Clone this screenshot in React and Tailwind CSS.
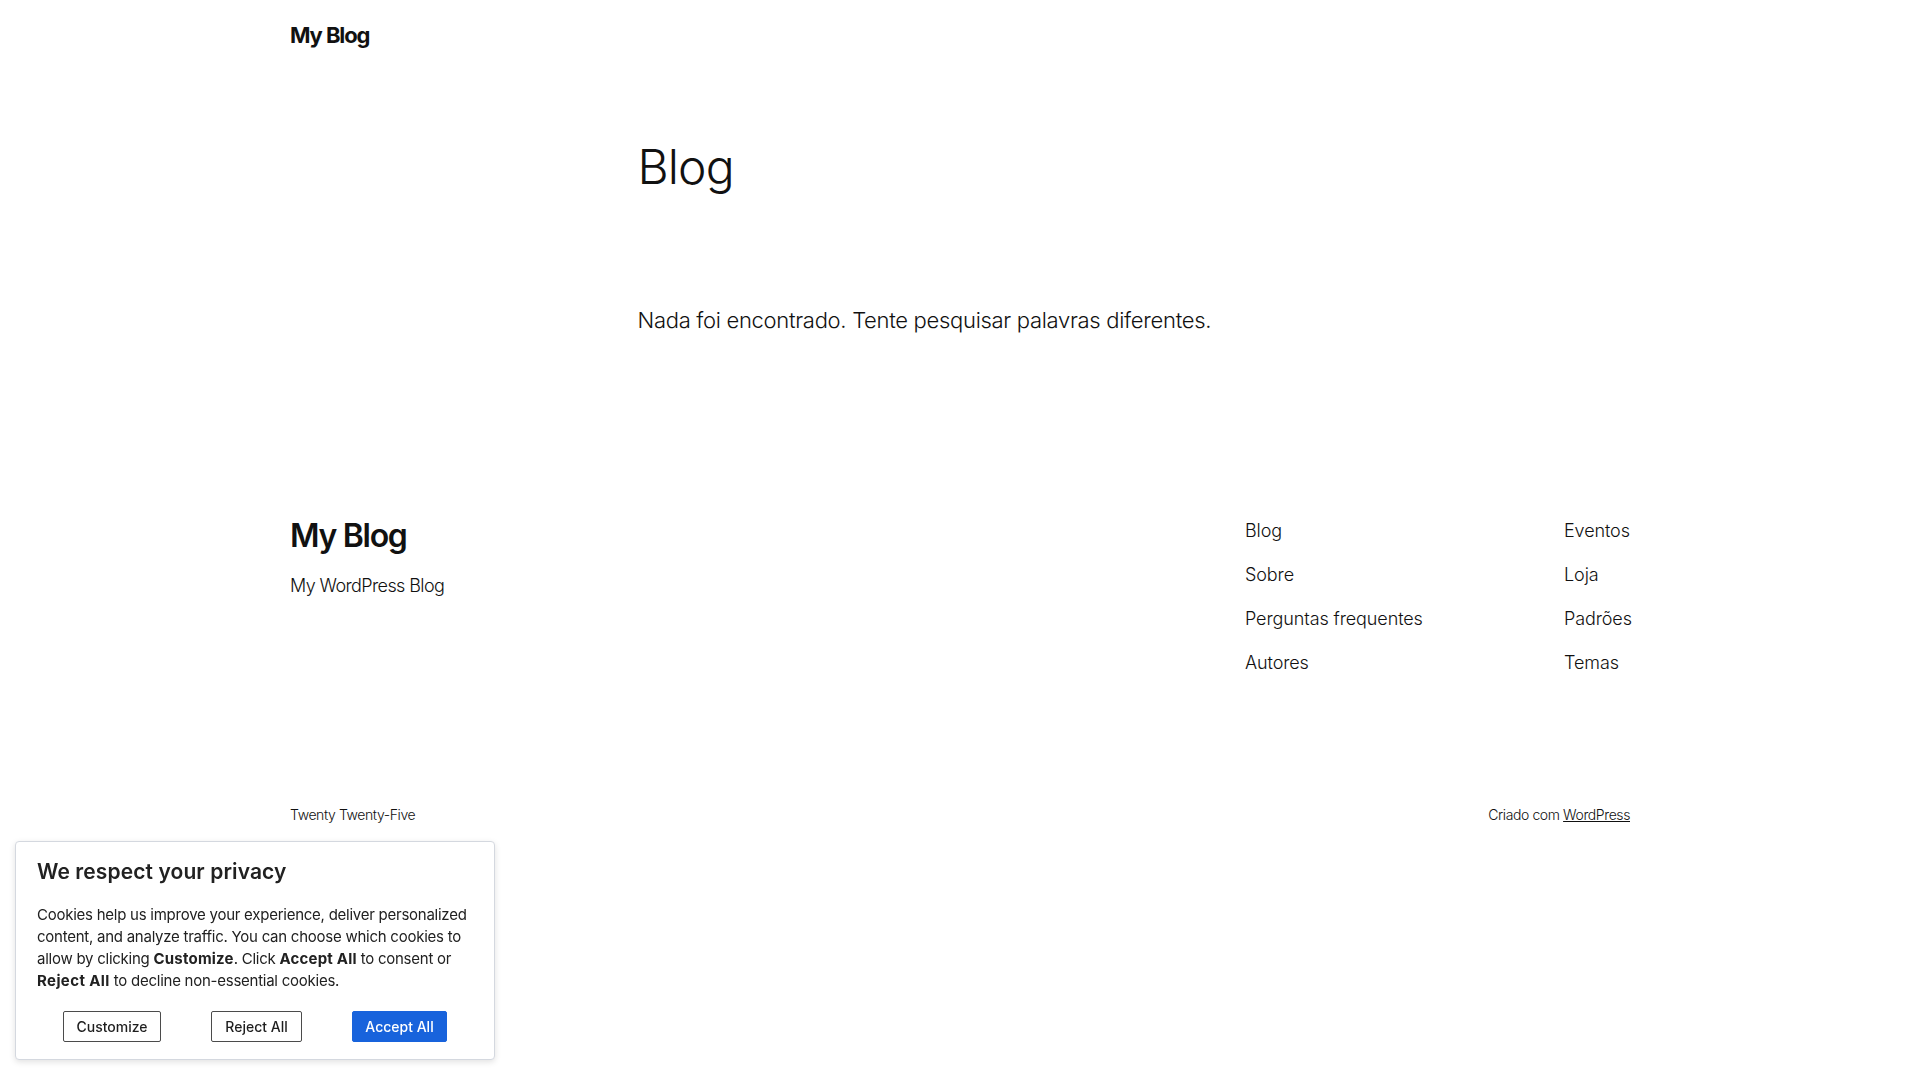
import React from "react";

const navLeft = ["Blog", "Sobre", "Perguntas frequentes", "Autores"];
const navRight = ["Eventos", "Loja", "Padrões", "Temas"];

function NavColumn({ items, className = "" }) {
  return (
    <ul className={"flex flex-col gap-[17px] " + className}>
      {items.map((item) => (
        <li key={item}>
          <a href="#" className="text-[18px] leading-[27px] font-light tracking-[-0.1px] text-[#111111]">
            {item}
          </a>
        </li>
      ))}
    </ul>
  );
}

function CookieBanner() {
  return (
    <div className="fixed left-[15px] bottom-[20px] w-[480px] bg-white border border-[#d4d8df] rounded-[4px] shadow-[0_2px_6px_rgba(0,0,0,0.12)] px-[21px] pt-[18px] pb-[17px] text-[#212121]">
      <h2 className="text-[21px] leading-[24px] font-semibold tracking-[0.1px]">We respect your privacy</h2>
      <p className="mt-[20px] text-[15px] leading-[22px] tracking-[-0.25px]">
        Cookies help us improve your experience, deliver personalized content, and analyze traffic. You
        can choose which cookies to allow by clicking <b className="font-bold tracking-[0.2px]">Customize</b>. Click{" "}
        <b className="font-bold tracking-[0.2px]">Accept All</b> to consent or{" "}
        <b className="font-bold tracking-[0.4px]">Reject All</b> to decline non-essential cookies.
      </p>
      <div className="mt-[19px] flex justify-around px-[1px]">
        <button className="w-[98px] h-[31px] border border-[#4b4b4b] rounded-[2px] text-[14px] font-medium text-[#1e1e1e] bg-white">
          Customize
        </button>
        <button className="w-[91px] h-[31px] border border-[#4b4b4b] rounded-[2px] text-[14px] font-medium text-[#1e1e1e] bg-white">
          Reject All
        </button>
        <button className="w-[95px] h-[31px] border border-[#1863dc] rounded-[2px] text-[14px] font-medium text-white bg-[#1863dc]">
          Accept All
        </button>
      </div>
    </div>
  );
}

export default function App() {
  return (
    <div className="min-h-screen bg-white text-[#111111] font-['Inter','Noto_Sans',sans-serif]">
      {/* header */}
      <header className="w-[1340px] mx-auto h-[68px] pt-[2px] flex items-center">
        <a href="#" className="text-[22px] leading-none font-bold tracking-[-1.1px]">
          My Blog
        </a>
      </header>

      {/* main */}
      <main className="w-[645px] mx-auto">
        <h1 className="mt-[75px] text-[48px] leading-[48px] font-light tracking-[-0.9px]">Blog</h1>
        <p className="mt-[114px] text-[22px] leading-[30.8px] font-light tracking-[-0.3px]">
          Nada foi encontrado. Tente pesquisar palavras diferentes.
        </p>
      </main>

      {/* footer */}
      <footer className="w-[1340px] mx-auto mt-[181px] pb-[60px]">
        <div className="flex justify-between items-start">
          <div>
            <h2 className="text-[32px] leading-[38.4px] font-semibold tracking-[-1.3px]">My Blog</h2>
            <p className="mt-[18px] text-[18px] leading-[25.2px] font-light tracking-[-0.6px]">My WordPress Blog</p>
          </div>
          <div className="flex">
            <NavColumn items={navLeft} className="w-[319px]" />
            <NavColumn items={navRight} className="w-[66px]" />
          </div>
        </div>
        <div className="mt-[129px] flex justify-between text-[14px] leading-[19.6px] font-light tracking-[-0.4px]">
          <p>Twenty Twenty-Five</p>
          <p>
            Criado com{" "}
            <a href="#" className="underline">
              WordPress
            </a>
          </p>
        </div>
      </footer>

      <CookieBanner />
    </div>
  );
}
